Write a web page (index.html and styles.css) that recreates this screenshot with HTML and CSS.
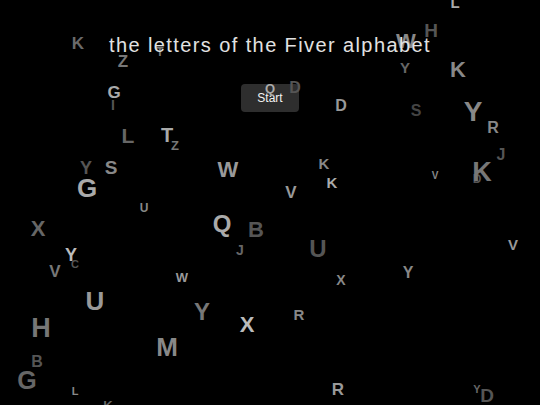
FILE: index.html
```html
<!DOCTYPE html>
<html lang="en">
<head>
<meta charset="utf-8">
<title>the letters of the Fiver alphabet</title>
<link rel="stylesheet" href="styles.css">
</head>
<body>
<main class="stage">
  <h1 class="title">the letters of the Fiver alphabet</h1>
  <button class="start" type="button">Start</button>
  <div class="letters" aria-hidden="true">
    <span class="l" style="--x:78px;--y:43px;--s:17px;--c:#6a6a6a">K</span>
    <span class="l" style="--x:123px;--y:61px;--s:17px;--c:#777">Z</span>
    <span class="l" style="--x:160px;--y:52px;--s:12px;--c:#777">T</span>
    <span class="l" style="--x:114px;--y:92px;--s:17px;--c:#aaa">G</span>
    <span class="l" style="--x:113px;--y:105px;--s:14px;--c:#555">I</span>
    <span class="l" style="--x:128px;--y:135px;--s:21px;--c:#666">L</span>
    <span class="l" style="--x:167px;--y:135px;--s:20px;--c:#aaa">T</span>
    <span class="l" style="--x:175px;--y:145px;--s:13px;--c:#777">Z</span>
    <span class="l" style="--x:270px;--y:88px;--s:13px;--c:#aaa">Q</span>
    <span class="l" style="--x:295px;--y:88px;--s:16px;--c:#555">D</span>
    <span class="l" style="--x:341px;--y:106px;--s:16px;--c:#999">D</span>
    <span class="l" style="--x:455px;--y:2px;--s:15px;--c:#aaa">L</span>
    <span class="l" style="--x:406px;--y:40px;--s:21px;--c:#888">W</span>
    <span class="l" style="--x:431px;--y:30px;--s:19px;--c:#555">H</span>
    <span class="l" style="--x:405px;--y:67px;--s:15px;--c:#666">Y</span>
    <span class="l" style="--x:458px;--y:70px;--s:22px;--c:#888">K</span>
    <span class="l" style="--x:416px;--y:111px;--s:16px;--c:#444">S</span>
    <span class="l" style="--x:473px;--y:112px;--s:28px;--c:#888">Y</span>
    <span class="l" style="--x:493px;--y:128px;--s:16px;--c:#888">R</span>
    <span class="l" style="--x:86px;--y:168px;--s:18px;--c:#555">Y</span>
    <span class="l" style="--x:111px;--y:167px;--s:19px;--c:#888">S</span>
    <span class="l" style="--x:87px;--y:188px;--s:26px;--c:#aaa">G</span>
    <span class="l" style="--x:144px;--y:208px;--s:12px;--c:#888">U</span>
    <span class="l" style="--x:38px;--y:229px;--s:22px;--c:#666">X</span>
    <span class="l" style="--x:71px;--y:255px;--s:18px;--c:#bbb">Y</span>
    <span class="l" style="--x:75px;--y:264px;--s:11px;--c:#555">C</span>
    <span class="l" style="--x:55px;--y:271px;--s:17px;--c:#777">V</span>
    <span class="l" style="--x:228px;--y:170px;--s:22px;--c:#999">W</span>
    <span class="l" style="--x:324px;--y:163px;--s:15px;--c:#888">K</span>
    <span class="l" style="--x:332px;--y:182px;--s:15px;--c:#aaa">K</span>
    <span class="l" style="--x:291px;--y:192px;--s:17px;--c:#999">V</span>
    <span class="l" style="--x:222px;--y:224px;--s:24px;--c:#aaa">Q</span>
    <span class="l" style="--x:256px;--y:230px;--s:22px;--c:#555">B</span>
    <span class="l" style="--x:240px;--y:250px;--s:14px;--c:#666">J</span>
    <span class="l" style="--x:318px;--y:249px;--s:24px;--c:#555">U</span>
    <span class="l" style="--x:435px;--y:176px;--s:10px;--c:#888">V</span>
    <span class="l" style="--x:477px;--y:179px;--s:12px;--c:#555">D</span>
    <span class="l" style="--x:482px;--y:172px;--s:27px;--c:#777">K</span>
    <span class="l" style="--x:501px;--y:155px;--s:16px;--c:#555">J</span>
    <span class="l" style="--x:513px;--y:244px;--s:15px;--c:#999">V</span>
    <span class="l" style="--x:408px;--y:273px;--s:16px;--c:#888">Y</span>
    <span class="l" style="--x:182px;--y:277px;--s:13px;--c:#999">W</span>
    <span class="l" style="--x:95px;--y:301px;--s:26px;--c:#999">U</span>
    <span class="l" style="--x:41px;--y:328px;--s:27px;--c:#777">H</span>
    <span class="l" style="--x:37px;--y:362px;--s:16px;--c:#555">B</span>
    <span class="l" style="--x:27px;--y:380px;--s:25px;--c:#666">G</span>
    <span class="l" style="--x:75px;--y:391px;--s:11px;--c:#888">L</span>
    <span class="l" style="--x:108px;--y:405px;--s:13px;--c:#666">K</span>
    <span class="l" style="--x:167px;--y:347px;--s:26px;--c:#888">M</span>
    <span class="l" style="--x:202px;--y:312px;--s:24px;--c:#777">Y</span>
    <span class="l" style="--x:247px;--y:325px;--s:22px;--c:#bbb">X</span>
    <span class="l" style="--x:299px;--y:314px;--s:15px;--c:#888">R</span>
    <span class="l" style="--x:341px;--y:280px;--s:14px;--c:#888">X</span>
    <span class="l" style="--x:338px;--y:389px;--s:17px;--c:#999">R</span>
    <span class="l" style="--x:477px;--y:389px;--s:11px;--c:#666">Y</span>
    <span class="l" style="--x:487px;--y:395px;--s:19px;--c:#555">D</span>
  </div>
</main>
</body>
</html>
```

FILE: styles.css
```css
html, body {
  margin: 0;
  padding: 0;
  background: #000;
}

.stage {
  position: relative;
  width: 540px;
  height: 405px;
  overflow: hidden;
  background: #000;
  display: flex;
  flex-direction: column;
  align-items: center;
  font-family: "Liberation Sans", Arial, sans-serif;
}

.title {
  position: relative;
  z-index: 2;
  margin: 34px 0 0;
  font-weight: normal;
  font-size: 20px;
  line-height: 23px;
  letter-spacing: 1.4px;
  color: #e2e2e2;
  white-space: nowrap;
}

.start {
  position: relative;
  z-index: 0;
  margin-top: 27px;
  width: 58px;
  height: 28px;
  padding: 0;
  border: none;
  border-radius: 4px;
  background: #2e2e2e;
  color: #f2f2f2;
  font-family: "Liberation Sans", Arial, sans-serif;
  font-size: 12px;
}

.letters {
  position: absolute;
  inset: 0;
  z-index: 1;
  pointer-events: none;
}

.l {
  position: absolute;
  left: var(--x);
  top: var(--y);
  transform: translate(-50%, -50%);
  font-weight: bold;
  font-size: var(--s);
  line-height: 1;
  color: var(--c);
}
```
